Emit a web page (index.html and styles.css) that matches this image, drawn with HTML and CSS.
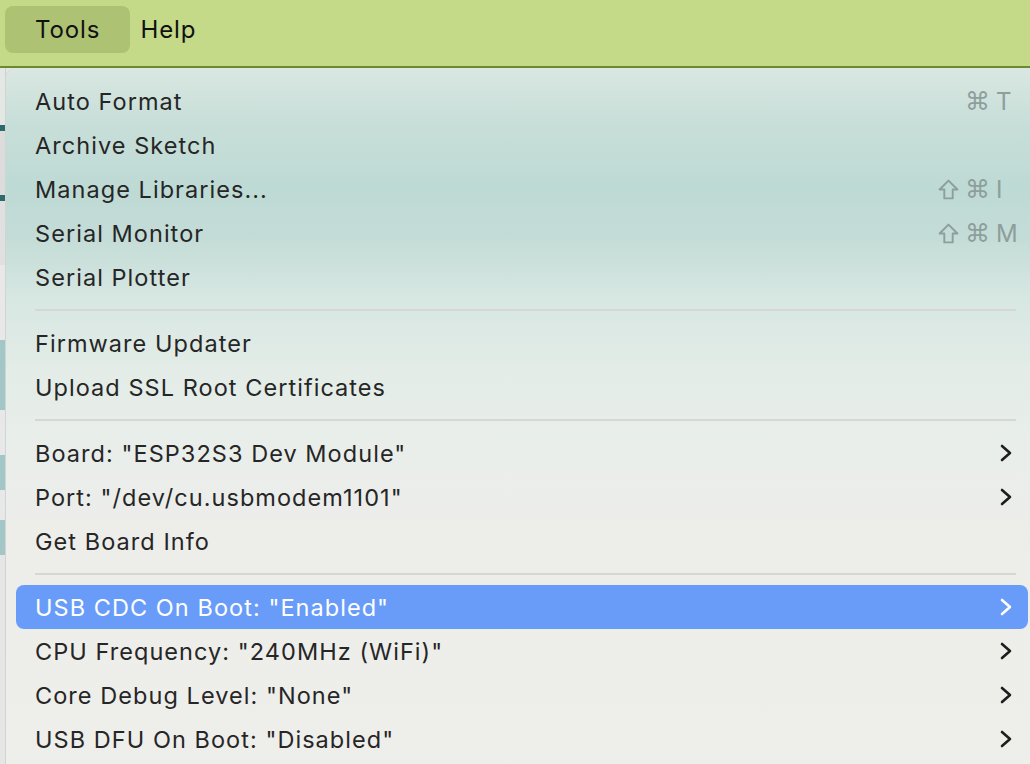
FILE: index.html
```html
<!DOCTYPE html>
<html>
<head>
<meta charset="utf-8">
<link rel="stylesheet" href="styles.css">
</head>
<body>
<div class="menubar">
  <div class="mtitle active">Tools</div>
  <div class="mtitle">Help</div>
</div>
<div class="app">
  <div class="strip">
    <div class="s s1"></div>
    <div class="s s2"></div>
    <div class="s s3"></div>
    <div class="s s4"></div>
    <div class="s s5"></div>
    <div class="s s6"></div>
    <div class="s s7"></div>
    <div class="s s8"></div>
    <div class="s s9"></div>
    <div class="s s10"></div>
    <div class="s s11"></div>
  </div>
</div>
<div class="dropdown">
  <div class="item"><span class="label">Auto Format</span><span class="key"><span class="mods">⌘</span><span class="letter">T</span></span></div>
  <div class="item"><span class="label">Archive Sketch</span></div>
  <div class="item"><span class="label">Manage Libraries...</span><span class="key"><span class="mods"><svg class="shift" viewBox="0 0 20 20"><polygon points="10,1.5 18.5,10 14,10 14,18.5 6,18.5 6,10 1.5,10"/></svg>⌘</span><span class="letter">I</span></span></div>
  <div class="item"><span class="label">Serial Monitor</span><span class="key"><span class="mods"><svg class="shift" viewBox="0 0 20 20"><polygon points="10,1.5 18.5,10 14,10 14,18.5 6,18.5 6,10 1.5,10"/></svg>⌘</span><span class="letter">M</span></span></div>
  <div class="item"><span class="label">Serial Plotter</span></div>
  <div class="sep"></div>
  <div class="item"><span class="label">Firmware Updater</span></div>
  <div class="item"><span class="label">Upload SSL Root Certificates</span></div>
  <div class="sep"></div>
  <div class="item"><span class="label">Board: "ESP32S3 Dev Module"</span><svg class="chev" viewBox="0 0 12 18"><polyline points="2,2 10,9 2,16"/></svg></div>
  <div class="item"><span class="label">Port: "/dev/cu.usbmodem1101"</span><svg class="chev" viewBox="0 0 12 18"><polyline points="2,2 10,9 2,16"/></svg></div>
  <div class="item"><span class="label">Get Board Info</span></div>
  <div class="sep"></div>
  <div class="item hl"><span class="label">USB CDC On Boot: "Enabled"</span><svg class="chev" viewBox="0 0 12 18"><polyline points="2,2 10,9 2,16"/></svg></div>
  <div class="item"><span class="label">CPU Frequency: "240MHz (WiFi)"</span><svg class="chev" viewBox="0 0 12 18"><polyline points="2,2 10,9 2,16"/></svg></div>
  <div class="item"><span class="label">Core Debug Level: "None"</span><svg class="chev" viewBox="0 0 12 18"><polyline points="2,2 10,9 2,16"/></svg></div>
  <div class="item"><span class="label">USB DFU On Boot: "Disabled"</span><svg class="chev" viewBox="0 0 12 18"><polyline points="2,2 10,9 2,16"/></svg></div>
</div>
</body>
</html>
```
FILE: styles.css
```css
html, body {
  margin: 0;
  padding: 0;
}
body {
  width: 1030px;
  height: 764px;
  overflow: hidden;
  position: relative;
  font-family: Inter, "Noto Sans", "Liberation Sans", sans-serif;
  background: #e6e6e6;
}
.menubar {
  height: 66px;
  background: #c5da88;
  border-bottom: 2px solid #6a8a2e;
  display: flex;
  align-items: center;
  padding-left: 5px;
  gap: 10px;
}
.mtitle {
  font-size: 24px;
  letter-spacing: 0.9px;
  color: #111;
  height: 47px;
  display: flex;
  align-items: center;
  margin-top: -7px;
}
.mtitle.active {
  background: #aec274;
  border-radius: 8px;
  padding: 0 30px;
}
.app {
  height: 696px;
  display: flex;
}
.strip {
  width: 5px;
  border-right: 1px solid #cfcfcf;
  display: flex;
  flex-direction: column;
  background: #e6e6e6;
}
.s1 { height: 57px; background: #e4e8e4; }
.s2 { height: 6px; background: #2c6b6d; }
.s3 { height: 64px; background: #dcdcdc; }
.s4 { height: 6px; background: #2c6b6d; }
.s5 { height: 64px; background: #e0e0e0; }
.s6 { height: 75px; background: #e8e8e8; }
.s7 { height: 70px; background: #a3c7c7; }
.s8 { height: 45px; background: #e8e8e8; }
.s9 { height: 35px; background: #a3c7c7; }
.s10 { height: 30px; background: #e8e8e8; }
.s11 { height: 35px; background: #a3c7c7; }
.dropdown {
  position: absolute;
  left: 6px;
  top: 68px;
  width: 1030px;
  height: 720px;
  border-radius: 11px 0 0 0;
  box-sizing: border-box;
  padding: 11px 0 0 10px;
  background: linear-gradient(to bottom, #dae7e2 0px, #c9dfd9 50px, #bedad5 120px, #c4dcd7 170px, #d7e7e2 230px, #e3ece7 300px, #e9eeea 380px, #ededea 460px, #eeeeeb 100%);
  box-shadow: -1px 0 0 #d2d4d2;
}
.item {
  width: 1012px;
  height: 44px;
  display: flex;
  align-items: center;
  padding: 0 16px 0 19px;
  box-sizing: border-box;
  border-radius: 8px;
  color: #262626;
  font-size: 23.5px;
  letter-spacing: 1.05px;
}
.label {
  flex: 1;
  white-space: nowrap;
}
.key {
  display: flex;
  align-items: center;
  color: #8d9e9b;
  margin-right: -8px;
  letter-spacing: 0;
}
.mods {
  display: flex;
  align-items: center;
  gap: 6px;
  font-family: "DejaVu Sans", sans-serif;
  font-size: 25px;
}
.shift {
  width: 21px;
  height: 21px;
  fill: none;
  stroke: #8d9e9b;
  stroke-width: 1.8;
  stroke-linejoin: round;
}
.letter {
  width: 24px;
  margin-left: 6px;
  font-size: 24px;
}
.chev {
  width: 12px;
  height: 18px;
  fill: none;
  stroke: #1e1e1e;
  stroke-width: 2.6;
  stroke-linecap: round;
  stroke-linejoin: round;
}
.sep {
  height: 2px;
  background: #d4d7d3;
  margin: 10px 12px 10px 19px;
  width: 981px;
}
.item.hl {
  background: #699cf8;
  color: #fff;
}
.item.hl .chev {
  stroke: #fff;
}
```
